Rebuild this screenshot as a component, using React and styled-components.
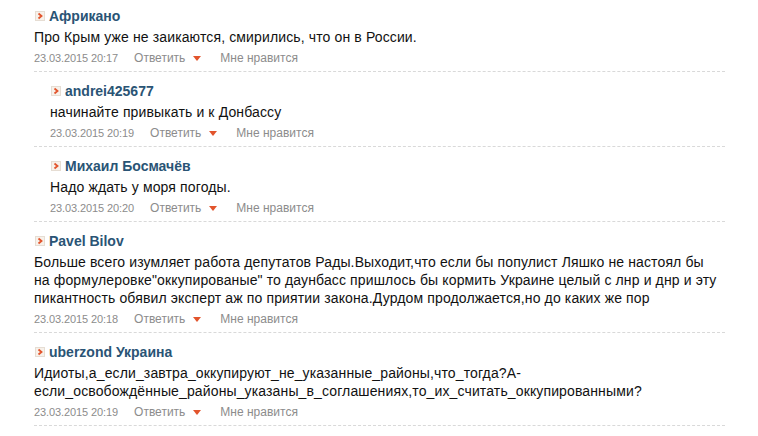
import React from 'react';
import styled, { createGlobalStyle } from 'styled-components';

// Global

const GlobalStyle = createGlobalStyle`
    body {
        margin: 0;
        background: #fff;
        font-family: "Liberation Sans", Arial, sans-serif;
    }
`

// Styles

const PageWrapper = styled.div`
    padding: 0 0 0 34px;
    width: 691px;
`

const CommentItem = styled.div`
    padding: 9px 0 4px ${props => props.$nested ? '16px' : '0'};
    border-bottom: 1px dashed #d9d9d9;

    &:first-child {
        padding-top: 6px;
    }
`

const Author = styled.div`
    display: flex;
    align-items: center;
    gap: 4px;
    height: 20px;
    padding-left: 1px;

    a {
        font-size: 14px;
        font-weight: 700;
        color: #2a5475;
        text-decoration: none;
    }
`

const Text = styled.p`
    margin: 2px 0 0 0;
    padding-right: 4px;
    font-size: 14px;
    line-height: 18px;
    letter-spacing: 0.13px;
    color: #111;
`

const Meta = styled.div`
    display: flex;
    align-items: center;
    margin-top: 3px;
    height: 18px;
    font-size: 12px;
    color: #8c8c8c;

    time {
        font-size: 11px;
        letter-spacing: -0.1px;
        margin-right: 16px;
    }

    a {
        color: #8c8c8c;
        text-decoration: none;
    }
`

const Reply = styled.a`
    display: flex;
    align-items: center;
    gap: 8px;
    margin-right: 19px;
`

const Arrow = styled.span`
    width: 0;
    height: 0;
    border-left: 4.5px solid transparent;
    border-right: 4.5px solid transparent;
    border-top: 5px solid #e2542c;
    margin-top: 1px;
`

// Icon

const Marker = () => (
    <svg width="10" height="10" viewBox="0 0 10 10">
        <rect x="0.5" y="0.5" width="9" height="9" fill="#f7f1ea" stroke="#e6ddd3" />
        <path d="M3.5 2.5 L6.5 5 L3.5 7.5" fill="none" stroke="#e2542c" strokeWidth="1.8" />
    </svg>
)

// Data

const comments = [
    { name: 'Африкано', date: '23.03.2015 20:17', text: 'Про Крым уже не заикаются, смирились, что он в России.' },
    { name: 'andrei425677', date: '23.03.2015 20:19', text: 'начинайте привыкать и к Донбассу', nested: true },
    { name: 'Михаил Босмачёв', date: '23.03.2015 20:20', text: 'Надо ждать у моря погоды.', nested: true },
    { name: 'Pavel Bilov', date: '23.03.2015 20:18', text: 'Больше всего изумляет работа депутатов Рады.Выходит,что если бы популист Ляшко не настоял бы на формулеровке"оккупированые" то даунбасс пришлось бы кормить Украине целый с лнр и днр и эту пикантность обявил эксперт аж по приятии закона.Дурдом продолжается,но до каких же пор' },
    { name: 'uberzond Украина', date: '23.03.2015 20:19', text: 'Идиоты,а_если_завтра_оккупируют_не_указанные_районы,что_тогда?А-если_освобождённые_районы_указаны_в_соглашениях,то_их_считать_оккупированными?' },
    { name: 'Slavik', date: '23.03.2015 20:21', text: 'Всё будет хорошо.' },
]

const App = () => {
    return (
        <>
            <GlobalStyle />
            <PageWrapper>
                {comments.map((c, i) => (
                    <CommentItem key={i} $nested={c.nested}>
                        <Author>
                            <Marker />
                            <a href="#">{c.name}</a>
                        </Author>
                        <Text>{c.text}</Text>
                        <Meta>
                            <time>{c.date}</time>
                            <Reply href="#">Ответить <Arrow /></Reply>
                            <a href="#">Мне нравится</a>
                        </Meta>
                    </CommentItem>
                ))}
            </PageWrapper>
        </>
    )
}

export default App;
